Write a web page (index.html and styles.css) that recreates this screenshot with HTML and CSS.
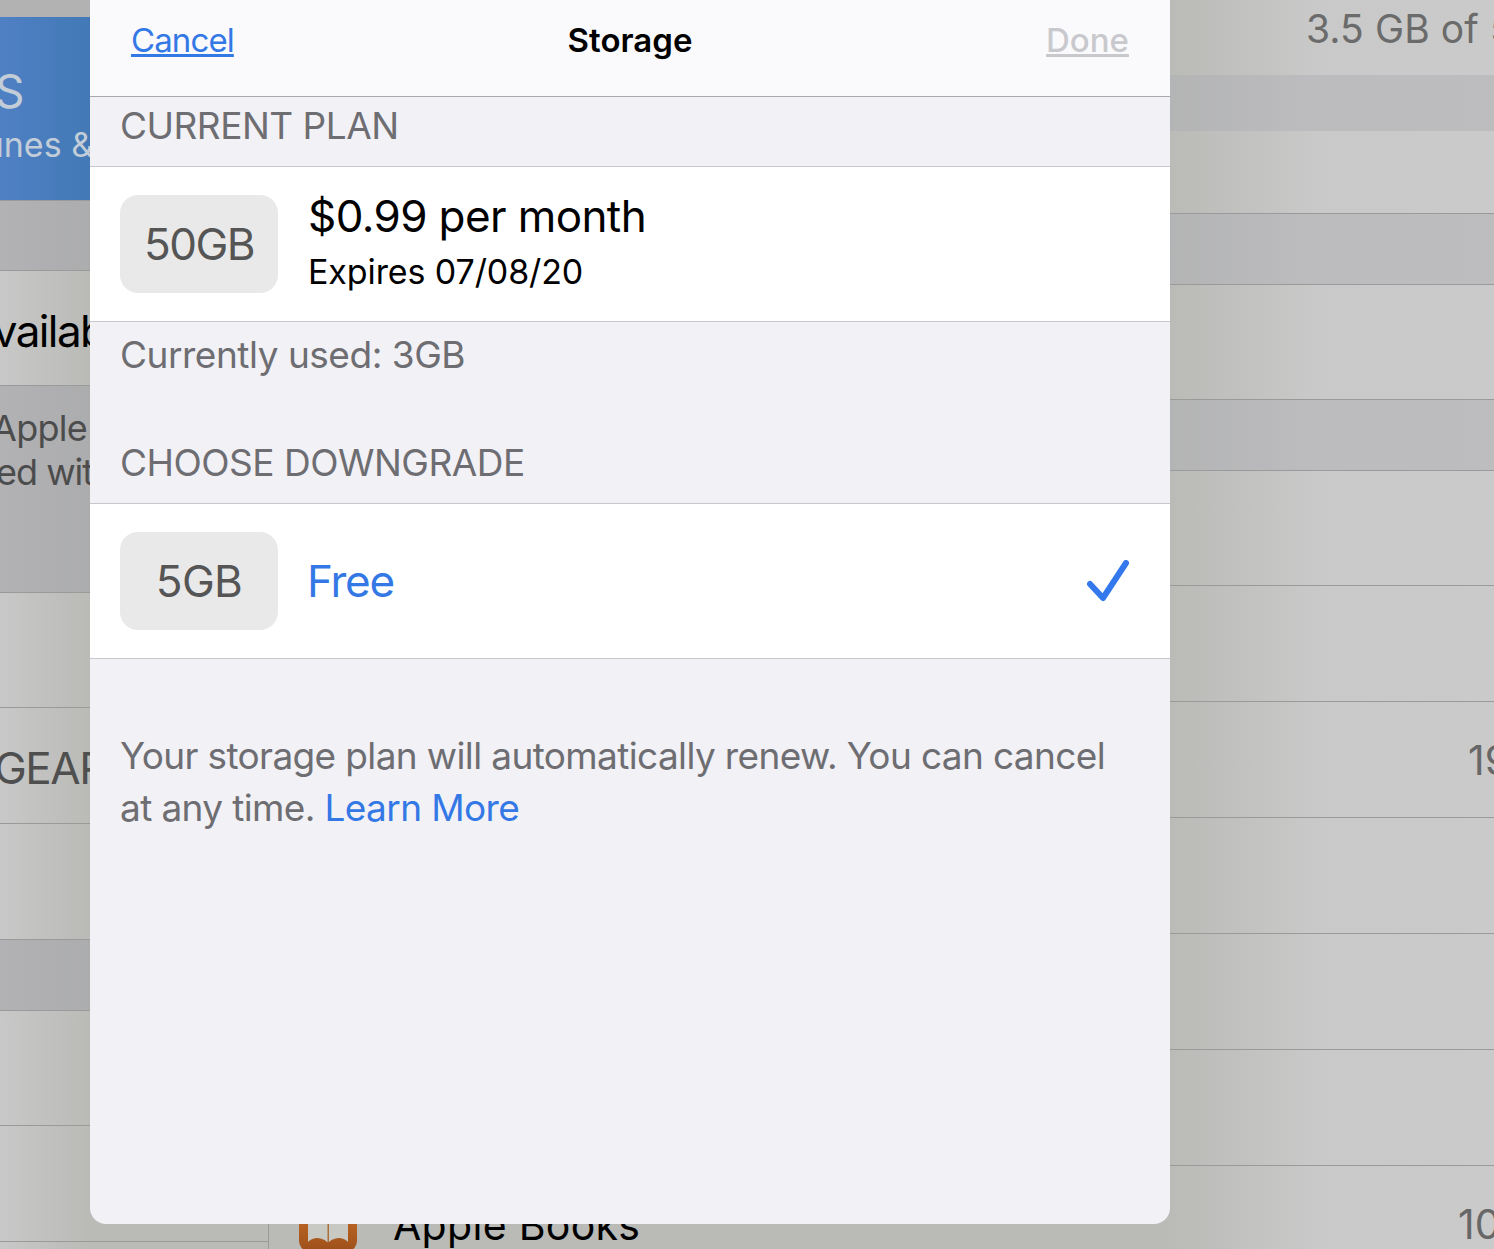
FILE: index.html
```html
<!DOCTYPE html>
<html lang="en">

<head>
    <meta charset="UTF-8">
    <title>Storage</title>
    <link rel="stylesheet" href="styles.css">
</head>

<body>
    <div class="settings">
        <div class="sidebar">
            <div class="side-row side-top"></div>
            <div class="side-row side-account">
                <div class="account-name">S</div>
                <div class="account-sub">iTunes &amp; App Store</div>
            </div>
            <div class="side-row side-band side-line"></div>
            <div class="side-row side-tall side-line"><span class="side-title">Available</span></div>
            <div class="side-row side-note side-band side-line">
                <div class="note-line note-apple">Apple</div>
                <div class="note-line note-with">ed with</div>
            </div>
            <div class="side-row side-tall side-line"></div>
            <div class="side-row side-wide side-line"><span class="side-gear">GEAR</span></div>
            <div class="side-row side-wide side-line"></div>
            <div class="side-row side-band side-band-low side-line"></div>
            <div class="side-row side-tall side-line"></div>
            <div class="side-row side-wide side-line"></div>
            <div class="side-row side-wide side-line"></div>
        </div>
        <div class="main">
            <div class="main-row main-usage"><span class="usage">3.5 GB of 5 GB Used</span></div>
            <div class="main-row main-band main-band-first"></div>
            <div class="main-row main-gap"></div>
            <div class="main-row main-band main-band-tall"></div>
            <div class="main-row main-short"></div>
            <div class="main-row main-band main-band-tall"></div>
            <div class="main-row main-short"></div>
            <div class="main-row main-std"></div>
            <div class="main-row main-std"><span class="value value-19">19.2 MB</span></div>
            <div class="main-row main-std"></div>
            <div class="main-row main-std"></div>
            <div class="main-row main-std"></div>
            <div class="main-row main-std">
                <svg class="app-icon" viewBox="0 0 58 58">
                    <defs>
                        <linearGradient id="bookFill" x1="0" y1="0" x2="0" y2="1">
                            <stop offset="0" stop-color="#d0742a"></stop>
                            <stop offset="1" stop-color="#9c4e1a"></stop>
                        </linearGradient>
                    </defs>
                    <rect width="58" height="58" rx="13" fill="url(#bookFill)"></rect>
                    <path d="M9 12h40v35c-3-3-6-4-9-4s-7 1-10 4h-2c-3-3-7-4-10-4s-6 1-9 4z" fill="#c9c9c4"></path>
                    <path d="M28.500 12h1.500v35h-1.500z" fill="#a8703c"></path>
                </svg>
                <span class="app-name">Apple Books</span>
                <span class="value value-10">10.4 MB</span>
            </div>
        </div>
    </div>

    <div class="sheet">
        <div class="sheet-nav">
            <a class="nav-cancel">Cancel</a>
            <div class="nav-title">Storage</div>
            <a class="nav-done">Done</a>
        </div>

        <div class="section-head head-current">CURRENT PLAN</div>
        <div class="plan-row">
            <div class="plan-badge badge-50">50GB</div>
            <div class="plan-info">
                <div class="plan-price">$0.99 per month</div>
                <div class="plan-expires">Expires 07/08/20</div>
            </div>
        </div>
        <div class="used">Currently used: 3GB</div>

        <div class="section-head head-choose">CHOOSE DOWNGRADE</div>
        <div class="plan-row">
            <div class="plan-badge badge-5">5GB</div>
            <div class="plan-free">Free</div>
            <svg class="check" viewBox="0 0 42 42">
                <path d="M3 24L16 38L39 3" fill="none" stroke="#3478ee" stroke-width="6" stroke-linecap="round"
                    stroke-linejoin="round"></path>
            </svg>
        </div>

        <p class="renew">Your storage plan will automatically renew. You can cancel at any time. <a
                class="learn">Learn More</a></p>
    </div>
</body>

</html>
```

FILE: styles.css
```css
* {
    padding: 0;
    margin: 0;
    box-sizing: border-box;
}

html,
body {
    height: 100%;
    overflow: hidden;
}

body {
    position: relative;
    font-family: Inter, "Liberation Sans", sans-serif;
    background: #c6c6c6;
}

/* dimmed settings page behind the sheet */
.settings {
    display: grid;
    grid-template-columns: 269px 1fr;
    height: 1249px;
    overflow: hidden;
}

.sidebar {
    overflow: hidden;
    border-right: 1px solid #9a9a98;
    background: linear-gradient(to right, #c8c8c8 0, #babbb7 90px, #babbb7 100%);
}

.side-row {
    overflow: hidden;
}

.side-line {
    border-top: 1px solid #9a9a9a;
}

.side-top {
    height: 17px;
    background: #b2b2b2;
}

.side-account {
    height: 183px;
    background: linear-gradient(to right, #4f80c4, #4279b6 90px);
    color: #c3cdd8;
}

.account-name {
    margin: 48px 0 0 -5px;
    font-size: 46px;
    line-height: 52px;
}

.account-sub {
    margin: 8px 0 0 -44px;
    font-size: 34px;
    line-height: 40px;
    white-space: nowrap;
}

.side-band {
    height: 70px;
    background: rgba(160, 160, 165, 0.55);
}

.side-band-low {
    height: 71px;
}

.side-tall,
.side-wide {
    display: flex;
    align-items: center;
}

.side-tall {
    height: 115px;
}

.side-wide {
    height: 116px;
}

.side-title {
    margin: 6px 0 0 -33px;
    font-size: 44px;
    letter-spacing: -1.6px;
    color: #000;
}

.side-note {
    height: 207px;
    padding-top: 20px;
    color: #4c4c4c;
    font-size: 36px;
    line-height: 44px;
    white-space: nowrap;
}

.note-apple {
    margin-left: -8px;
    letter-spacing: -0.7px;
}

.note-with {
    margin-left: -4px;
    letter-spacing: -1px;
}

.side-gear {
    margin: 5px 0 0 -6px;
    font-size: 44px;
    letter-spacing: -1.5px;
    color: #4f4f4f;
}

.main {
    overflow: hidden;
    background: linear-gradient(to right, #babbb7 0, #babbb7 900px, #c9c9c9 1050px, #cacaca 100%);
}

.main-row {
    display: flex;
    align-items: center;
    white-space: nowrap;
}

.main-usage {
    height: 75px;
    padding: 0 0 18px 1037px;
}

.usage {
    font-size: 39px;
    letter-spacing: 0.1px;
    color: #6b6b6b;
}

.main-band {
    background: rgba(170, 170, 178, 0.4);
}

.main-band-first {
    height: 56px;
}

.main-gap {
    height: 82px;
}

.main-band-tall {
    height: 71px;
    border-top: 1px solid #9a9a9a;
}

.main-short {
    height: 115px;
    border-top: 1px solid #9a9a9a;
}

.main-std {
    height: 116px;
    border-top: 1px solid #9a9a9a;
}

.value {
    flex: none;
    margin-left: auto;
    font-size: 41px;
    color: #676767;
}

.value-19 {
    width: 26px;
}

.value-10 {
    width: 36px;
}

.app-icon {
    flex: none;
    width: 58px;
    height: 58px;
    margin-left: 30px;
}

.app-name {
    margin: 3px 0 0 36px;
    font-size: 41px;
    letter-spacing: 0.3px;
    color: #000;
}

/* the modal sheet */
.sheet {
    position: absolute;
    top: 0;
    left: 90px;
    width: 1080px;
    height: 1224px;
    overflow: hidden;
    border-radius: 0 0 16px 16px;
    background: #f1f1f6;
    color: #6d6d72;
}

.sheet-nav {
    display: grid;
    grid-template-columns: 1fr auto 1fr;
    align-items: center;
    height: 97px;
    padding: 0 41px 16px;
    border-bottom: 1px solid #a9a9ad;
    background: #fafafd;
    font-size: 33px;
}

.nav-cancel {
    justify-self: start;
    letter-spacing: -0.9px;
    color: #3478e6;
    text-decoration: underline;
}

.nav-title {
    font-weight: 600;
    color: #000;
}

.nav-done {
    justify-self: end;
    font-weight: 500;
    color: #c9c9cd;
    text-decoration: underline;
}

.section-head {
    display: flex;
    align-items: center;
    padding-left: 30px;
    border-bottom: 1px solid #c8c8cc;
    font-size: 37px;
    letter-spacing: -0.5px;
}

.head-current {
    height: 70px;
    padding-bottom: 12px;
}

.head-choose {
    height: 74px;
    padding-bottom: 8px;
}

.plan-row {
    display: flex;
    align-items: center;
    height: 155px;
    padding: 0 41px 1px 30px;
    border-bottom: 1px solid #c8c8cc;
    background: #fff;
}

.plan-badge {
    display: flex;
    flex: none;
    align-items: center;
    justify-content: center;
    width: 158px;
    height: 98px;
    border-radius: 18px;
    background: #e9e9e9;
    font-size: 44px;
    color: #555;
}

.badge-50 {
    letter-spacing: -1.5px;
}

.badge-5 {
    letter-spacing: -0.7px;
}

.plan-info {
    margin-left: 30px;
    color: #000;
}

.plan-price {
    font-size: 44px;
    line-height: 50px;
    letter-spacing: -0.6px;
}

.plan-expires {
    margin: 9px 0 2px;
    font-size: 34px;
    line-height: 44px;
    letter-spacing: -0.1px;
}

.plan-free {
    margin-left: 29px;
    font-size: 44px;
    letter-spacing: -1.2px;
    color: #3478e6;
}

.check {
    width: 42px;
    height: 42px;
    margin-left: auto;
}

.used {
    height: 108px;
    padding: 9px 0 0 30px;
    font-size: 37px;
    line-height: 48px;
    letter-spacing: -0.47px;
}

.renew {
    padding: 71px 50px 0 30px;
    font-size: 37px;
    line-height: 52px;
    letter-spacing: -0.63px;
}

.learn {
    color: #3478e6;
}
```
